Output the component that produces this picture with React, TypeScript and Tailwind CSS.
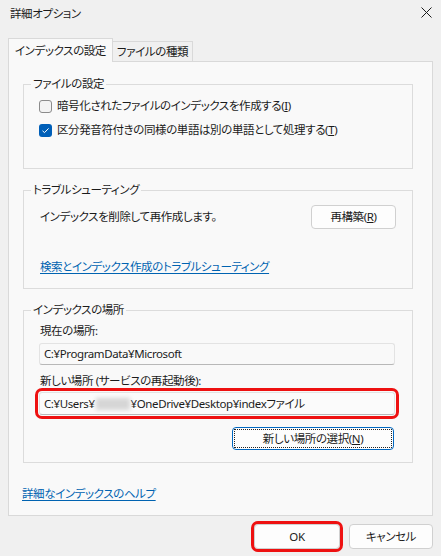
import React from 'react';

const jp = '"Noto Sans", "Noto Sans CJK JP", sans-serif';

const Checkbox = ({ checked }: { checked: boolean }) =>
  checked ? (
    <span className="w-[13px] h-[13px] rounded-[3px] bg-[#005fb8] flex items-center justify-center shrink-0">
      <svg width="9" height="9" viewBox="0 0 9 9">
        <path d="M1.5 4.8 L3.5 6.6 L7.6 2.4" fill="none" stroke="#fff" strokeWidth="1" />
      </svg>
    </span>
  ) : (
    <span className="w-[13px] h-[13px] rounded-[3px] border border-[#8b8b8b] bg-[#f3f3f3] shrink-0" />
  );

const Group: React.FC<{ title: string; className: string; children: React.ReactNode }> = ({
  title,
  className,
  children,
}) => (
  <fieldset className={`border border-[#dcdcdc] w-[390px] ${className}`}>
    <legend className="ml-[7px] px-[2px] leading-[16px] text-[#1b1b1b]">{title}</legend>
    {children}
  </fieldset>
);

const App: React.FC = () => {
  return (
    <div
      className="w-[441px] h-[556px] bg-[#f0f0f0] flex flex-col text-[#1b1b1b] text-[11.5px] tracking-[-0.4px] overflow-hidden [font-feature-settings:'palt']"
      style={{ fontFamily: jp }}
    >
      {/* Title bar */}
      <div className="h-[29px] flex items-center justify-between pl-[10px] pr-[9px] shrink-0">
        <span className="leading-[16px] -mt-[2px]">詳細オプション</span>
        <svg width="11" height="11" viewBox="0 0 11 11" className="-mt-[4px]">
          <path d="M0.5 0.5 L10.5 10.5 M10.5 0.5 L0.5 10.5" stroke="#1b1b1b" strokeWidth="1" />
        </svg>
      </div>

      <div className="px-[8px] flex flex-col">
        {/* Tabs */}
        <div className="flex items-end h-[32px] pt-[9px]">
          <div className="h-[24px] -mb-px relative z-10 bg-[#f9f9f9] border border-b-0 border-[#d9d9d9] px-[6px] flex items-center">
            インデックスの設定
          </div>
          <div className="h-[20px] bg-[#f0f0f0] border border-l-0 border-b-0 border-[#d9d9d9] px-[4px] flex items-center">
            ファイルの種類
          </div>
        </div>

        {/* Panel */}
        <div className="h-[455px] bg-[#f9f9f9] border border-[#d9d9d9] pt-[14px] pl-[14px] flex flex-col">
          <Group title="ファイルの設定" className="h-[93px]">
            <div className="pl-[15px] pt-[6px] flex flex-col gap-[8px]">
              <div className="flex items-center gap-[5px] h-[16px]">
                <Checkbox checked={false} />
                <span>
                  暗号化されたファイルのインデックスを作成する(<u>I</u>)
                </span>
              </div>
              <div className="flex items-center gap-[5px] h-[16px]">
                <Checkbox checked />
                <span>
                  区分発音符付きの同様の単語は別の単語として処理する(<u>T</u>)
                </span>
              </div>
            </div>
          </Group>

          <Group title="トラブルシューティング" className="h-[107px] mt-[13px]">
            <div className="pl-[16px] pt-[7px]">
              <div className="flex items-center h-[24px]">
                <span className="w-[271px]">インデックスを削除して再作成します。</span>
                <button className="w-[85px] h-[24px] bg-[#fdfdfd] border border-[#d0d0d0] rounded-[4px] flex items-center justify-center">
                  再構築(<u>R</u>)
                </button>
              </div>
              <div className="mt-[30px] h-[16px] flex items-center">
                <a className="text-[#0063b1] underline underline-offset-2 cursor-pointer">
                  検索とインデックス作成のトラブルシューティング
                </a>
              </div>
            </div>
          </Group>

          <Group title="インデックスの場所" className="h-[161px] mt-[13px]">
            <div className="pl-[15px] pt-[5px] flex flex-col">
              <div className="h-[16px] flex items-center pl-[1px]">現在の場所:</div>
              <div className="mt-[4px] w-[356px] h-[22px] bg-[#f9f9f9] border border-[#e3e3e3] border-b-[#b8b8b8] rounded-[3px] flex items-center pl-[4px]">
                C:¥ProgramData¥Microsoft
              </div>
              <div className="mt-[8px] h-[16px] flex items-center pl-[1px]">
                新しい場所 (サービスの再起動後):
              </div>
              <div className="mt-[3px] w-[356px] h-[23px] bg-[#fbfbfb] border border-[#e3e3e3] border-b-[#b8b8b8] rounded-[3px] flex items-center pl-[4px] outline-[3px] outline-solid outline-[#ee1111] outline-offset-[1px]">
                C:¥Users¥
                <span className="inline-block w-[34px] h-[12px] bg-[#d6d6d6] blur-[2px] mx-[1px]" />
                ¥OneDrive¥Desktop¥indexファイル
              </div>
              <div className="mt-[12px] w-[356px] flex justify-end pr-px">
                <button className="w-[162px] h-[23px] bg-[#fdfdfd] border border-[#0067c0] rounded-[4px] p-[1px]">
                  <span className="w-full h-full border border-dotted border-[#222] flex items-center justify-center">
                    新しい場所の選択(<u>N</u>)
                  </span>
                </button>
              </div>
            </div>
          </Group>

          <div className="mt-[23px] -ml-[1px] h-[16px] flex items-center">
            <a className="text-[#0063b1] underline underline-offset-2 cursor-pointer">
              詳細なインデックスのヘルプ
            </a>
          </div>
        </div>

        {/* Footer buttons */}
        <div className="flex justify-end gap-[9px] mt-[8px]">
          <button className="w-[86px] h-[25px] bg-[#fdfdfd] border border-[#d0d0d0] rounded-[4px] outline-[3px] outline-solid outline-[#ee1111]">
            OK
          </button>
          <button className="w-[84px] h-[25px] bg-[#fdfdfd] border border-[#d0d0d0] rounded-[4px]">
            キャンセル
          </button>
        </div>
      </div>
    </div>
  );
};

export default App;
